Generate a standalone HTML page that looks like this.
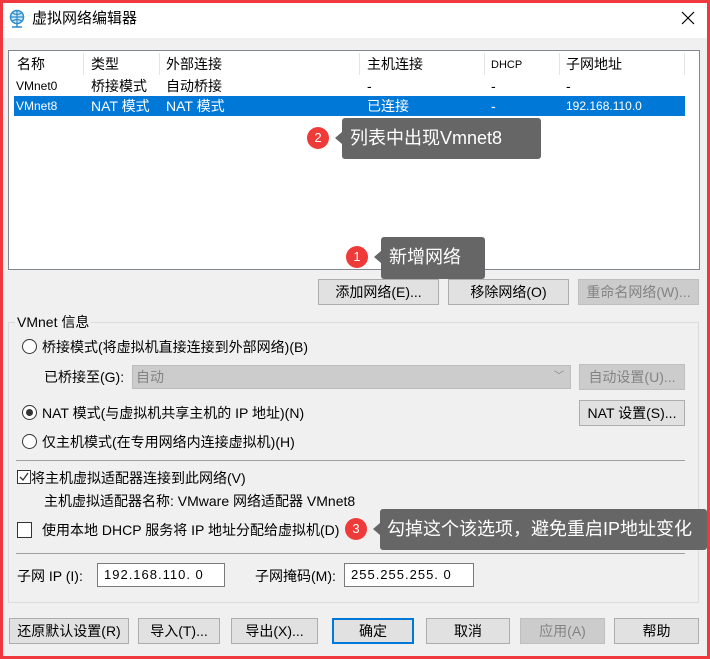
<!DOCTYPE html>
<html><head><meta charset="utf-8"><style>
*{box-sizing:border-box;margin:0;padding:0}
body{width:710px;height:659px;overflow:hidden;background:#f0f0f0;font-family:"Liberation Sans","Noto Sans CJK SC",sans-serif;font-size:14px;color:#000;position:relative}
.a{position:absolute;white-space:nowrap;line-height:16px}
.frame{position:absolute;left:0;top:0;width:710px;height:659px;border:3px solid #f0393e;z-index:50;pointer-events:none}
.btn{position:absolute;height:26px;background:#e1e1e1;border:1px solid #adadad;text-align:center;line-height:24px;font-size:14px;white-space:nowrap}
.dis{background:#cccccc;border-color:#bfbfbf;color:#838383}
.radio{position:absolute;width:15px;height:15px;border:1px solid #333;border-radius:50%;background:#fff}
.cb{position:absolute;width:14px;height:14px;border:1px solid #333;background:#fff}
.call{position:absolute;background:#666;color:#fff;font-size:18px;border-radius:3px;line-height:40px;padding-left:8px;white-space:nowrap}
.dot{position:absolute;width:22px;height:22px;border-radius:50%;background:#ef3a3a;color:#fff;font-size:13px;text-align:center;line-height:22px}
.tri{position:absolute;width:0;height:0;border-top:6px solid transparent;border-bottom:6px solid transparent;border-right:7px solid #666}
.inp{position:absolute;height:24px;background:#fff;border:1px solid #7a7a7a;line-height:22px;padding-left:6px;letter-spacing:1px;font-size:13px}
.s{font-size:12px}
</style></head><body>
<div class="frame"></div>
<div style="position:absolute;left:0;top:0;width:710px;height:38px;background:#fff"></div>
<svg class="a" style="left:8px;top:9px" width="18" height="20" viewBox="0 0 18 20"><circle cx="9" cy="8" r="6.5" fill="#cfe8f7" stroke="#2a8ccf" stroke-width="1.5"/><path d="M2.5 8h13M9 1.5v13M4.5 4c3 2 6 2 9 0M4.5 12c3-2 6-2 9 0" stroke="#2a8ccf" stroke-width="1.2" fill="none"/><path d="M4 18h10M9 15v3" stroke="#2a8ccf" stroke-width="1.5"/></svg>
<div class="a" style="left:32px;top:10px;font-size:15px;line-height:18px">虚拟网络编辑器</div>
<svg class="a" style="left:681px;top:11px" width="14" height="14"><path d="M1 1L13 13M13 1L1 13" stroke="#000" stroke-width="1.2"/></svg>

<div style="position:absolute;left:8px;top:50px;width:692px;height:220px;background:#fff;border:1px solid #828790"></div>
<div style="position:absolute;left:14px;top:96px;width:671px;height:20px;background:#0078d7"></div>
<div style="position:absolute;left:83px;top:53px;width:1px;height:22px;background:#e5e5e5"></div>
<div style="position:absolute;left:159px;top:53px;width:1px;height:22px;background:#e5e5e5"></div>
<div style="position:absolute;left:359px;top:53px;width:1px;height:22px;background:#e5e5e5"></div>
<div style="position:absolute;left:484px;top:53px;width:1px;height:22px;background:#e5e5e5"></div>
<div style="position:absolute;left:559px;top:53px;width:1px;height:22px;background:#e5e5e5"></div>
<div style="position:absolute;left:684px;top:53px;width:1px;height:22px;background:#e5e5e5"></div>
<div class="a" style="left:17px;top:56px">名称</div><div class="a" style="left:91px;top:56px">类型</div><div class="a" style="left:166px;top:56px">外部连接</div><div class="a" style="left:367px;top:56px">主机连接</div><div class="a" style="left:491px;top:57px;font-size:11px">DHCP</div><div class="a" style="left:566px;top:56px">子网地址</div>
<div class="a s" style="left:16px;top:78px">VMnet0</div><div class="a" style="left:91px;top:78px">桥接模式</div><div class="a" style="left:166px;top:78px">自动桥接</div><div class="a" style="left:367px;top:78px">-</div><div class="a" style="left:491px;top:78px">-</div><div class="a" style="left:566px;top:78px">-</div>
<div class="a s" style="left:16px;top:98px;color:#fff">VMnet8</div><div class="a" style="left:91px;top:98px;color:#fff">NAT 模式</div><div class="a" style="left:166px;top:98px;color:#fff">NAT 模式</div><div class="a" style="left:367px;top:98px;color:#fff">已连接</div><div class="a" style="left:491px;top:98px;color:#fff">-</div><div class="a s" style="left:566px;top:98px;color:#fff">192.168.110.0</div>

<div class="dot" style="left:307px;top:127px">2</div><div class="tri" style="left:335px;top:132px"></div>
<div class="call" style="left:342px;top:118px;width:199px;height:41px">列表中出现Vmnet8</div>

<div class="btn" style="left:318px;top:279px;width:121px">添加网络(E)...</div>
<div class="btn" style="left:448px;top:279px;width:121px">移除网络(O)</div>
<div class="btn dis" style="left:578px;top:279px;width:121px">重命名网络(W)...</div>
<div class="dot" style="left:346px;top:246px">1</div><div class="tri" style="left:374px;top:251px"></div>
<div class="call" style="left:381px;top:237px;width:104px;height:42px">新增网络</div>

<div style="position:absolute;left:8px;top:322px;width:691px;height:281px;border:1px solid #dcdcdc"></div>
<div class="a" style="left:15px;top:314px;background:#f0f0f0;padding:0 2px">VMnet 信息</div>
<div class="radio" style="left:22px;top:339px"></div>
<div class="a" style="left:42px;top:339px">桥接模式(将虚拟机直接连接到外部网络)(B)</div>
<div class="a" style="left:44px;top:369px">已桥接至(G):</div>
<div style="position:absolute;left:132px;top:365px;width:439px;height:24px;background:#ccc;border:1px solid #bdbdbd;color:#838383;line-height:22px;padding-left:3px">自动<span style="position:absolute;right:6px;top:0;font-size:10px">﹀</span></div>
<div class="btn dis" style="left:579px;top:364px;width:106px">自动设置(U)...</div>
<div class="radio" style="left:22px;top:405px"></div><div style="position:absolute;left:26px;top:409px;width:7px;height:7px;border-radius:50%;background:#333"></div>
<div class="a" style="left:42px;top:405px">NAT 模式(与虚拟机共享主机的 IP 地址)(N)</div>
<div class="btn" style="left:579px;top:400px;width:106px">NAT 设置(S)...</div>
<div class="radio" style="left:22px;top:434px"></div>
<div class="a" style="left:42px;top:434px">仅主机模式(在专用网络内连接虚拟机)(H)</div>
<div style="position:absolute;left:16px;top:460px;width:669px;height:1px;background:#a0a0a0"></div>
<div class="cb" style="left:17px;top:470px"></div>
<svg class="a" style="left:18px;top:471px" width="12" height="12"><path d="M2 6l3 3 5-7" stroke="#333" stroke-width="1.3" fill="none"/></svg>
<div class="a" style="left:31px;top:470px">将主机虚拟适配器连接到此网络(V)</div>
<div class="a" style="left:44px;top:493px">主机虚拟适配器名称: VMware 网络适配器 VMnet8</div>
<div class="cb" style="left:17px;top:522px;width:15px;height:16px"></div>
<div class="a" style="left:42px;top:522px">使用本地 DHCP 服务将 IP 地址分配给虚拟机(D)</div>
<div class="dot" style="left:345px;top:518px">3</div><div class="tri" style="left:373px;top:523px"></div>
<div class="call" style="left:380px;top:509px;width:327px;height:41px;padding-left:7px">勾掉这个该选项，避免重启IP地址变化</div>
<div style="position:absolute;left:16px;top:553px;width:669px;height:1px;background:#a0a0a0"></div>
<div class="a" style="left:17px;top:568px">子网 IP (I):</div>
<div class="inp" style="left:97px;top:563px;width:128px">192.168.110. 0</div>
<div class="a" style="left:255px;top:568px">子网掩码(M):</div>
<div class="inp" style="left:344px;top:563px;width:130px">255.255.255. 0</div>

<div class="btn" style="left:9px;top:618px;width:120px">还原默认设置(R)</div>
<div class="btn" style="left:138px;top:618px;width:82px">导入(T)...</div>
<div class="btn" style="left:231px;top:618px;width:87px">导出(X)...</div>
<div class="btn" style="left:332px;top:618px;width:82px;border:2px solid #0078d7;line-height:22px">确定</div>
<div class="btn" style="left:426px;top:618px;width:84px">取消</div>
<div class="btn dis" style="left:520px;top:618px;width:85px">应用(A)</div>
<div class="btn" style="left:614px;top:618px;width:85px">帮助</div>
</body></html>
